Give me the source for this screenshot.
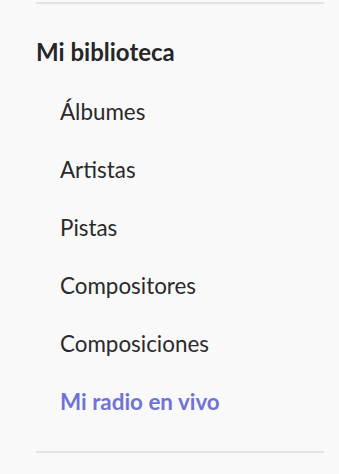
export default function App() {
  const items = ["Álbumes", "Artistas", "Pistas", "Compositores", "Composiciones"];
  return (
    <div
      className="min-h-[474px] bg-[#f9f9fa] pl-[36px] pr-[15px] pt-[2px]"
      style={{ fontFamily: "Lato, 'Noto Sans', sans-serif" }}
    >
      <div className="h-[2px] bg-[#e3e3e5]" />
      <h2 className="mt-[19px] text-[24px] leading-[58px] font-bold text-[#262626]">Mi biblioteca</h2>
      <ul className="mt-[2px] pl-[24px]">
        {items.map((item) => (
          <li key={item} className="text-[22.4px] leading-[58px] text-[#2a2a2a]">
            {item}
          </li>
        ))}
        <li className="text-[22.4px] leading-[58px] font-bold text-[#7272d6]">Mi radio en vivo</li>
      </ul>
      <div className="mt-[20px] h-[2px] bg-[#e3e3e5]" />
    </div>
  );
}
